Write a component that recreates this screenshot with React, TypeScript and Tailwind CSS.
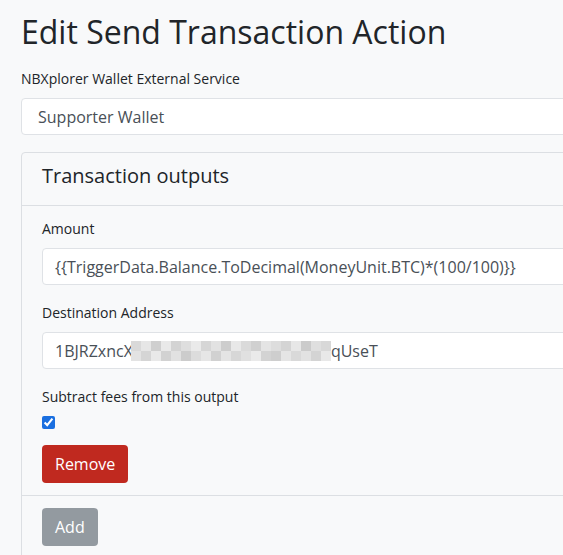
import type { ReactNode } from "react";

// shades for the blurred part of the address (pixelated mosaic)
const mosaicTop = ["#d9d9d9", "#e6e6e6", "#cfcfcf", "#e9e9e9", "#d3d3d3", "#dedede", "#eaeaea", "#d6d6d6", "#e2e2e2", "#cdcdcd", "#e8e8e8", "#dadada", "#d0d0d0", "#e4e4e4", "#dddddd", "#d4d4d4", "#e7e7e7", "#cbcbcb", "#dfdfdf", "#d8d8d8"];
const mosaicBottom = ["#e3e3e3", "#d5d5d5", "#e9e9e9", "#d2d2d2", "#e1e1e1", "#cccccc", "#dcdcdc", "#e6e6e6", "#d1d1d1", "#e4e4e4", "#d7d7d7", "#e0e0e0", "#eaeaea", "#d3d3d3", "#cecece", "#e5e5e5", "#d9d9d9", "#e2e2e2", "#d4d4d4", "#e8e8e8"];

export default function App() {
  return (
    <div className="w-[563px] h-[555px] overflow-hidden bg-[#f8f9fa] text-[#212529] font-['Open_Sans',sans-serif]">
      <div className="w-[800px] pl-[21px] pt-[13px]">
        <h1 className="text-[32px] leading-[1.2] font-normal">Edit Send Transaction Action</h1>

        <Label className="mt-[17px]">NBXplorer Wallet External Service</Label>
        <div className="h-[37px] flex items-center pl-4 bg-white border border-[#dfe2e6] rounded-[4px] text-[16px] text-[#495057]">
          Supporter Wallet
        </div>

        {/* Carte des sorties */}
        <div className="mt-[17px] border border-[#dcdfe3] rounded-[4px]">
          <div className="px-5 pt-[11px] pb-[17px] border-b border-[#dcdfe3]">
            <h4 className="text-[20px] leading-[1.2]">Transaction outputs</h4>
          </div>

          <div className="px-5 pt-3 pb-[12px]">
            <Label>Amount</Label>
            <Input>{"{{TriggerData.Balance.ToDecimal(MoneyUnit.BTC)*(100/100)}}"}</Input>

            <Label className="mt-[17px]">Destination Address</Label>
            <Input>
              <span>1BJRZxncX</span>
              <span className="flex flex-col -ml-[2px]">
                <span className="flex">
                  {mosaicTop.map((c, i) => (
                    <span key={i} className="w-[10px] h-[10px]" style={{ background: c }} />
                  ))}
                </span>
                <span className="flex">
                  {mosaicBottom.map((c, i) => (
                    <span key={i} className="w-[10px] h-[10px]" style={{ background: c }} />
                  ))}
                </span>
              </span>
              <span>qUseT</span>
            </Input>

            <Label className="mt-[17px]">Subtract fees from this output</Label>
            <div className="h-[13px] mt-[1px] flex items-center">
              <input type="checkbox" defaultChecked className="w-[13px] h-[13px] m-0 accent-[#1a6fe0]" />
            </div>

            <button className="mt-[16px] h-[38px] px-[13px] rounded-[4px] bg-[#c0291f] text-white text-[16px]">
              Remove
            </button>
          </div>

          <div className="px-5 pt-3 pb-3 border-t border-[#dcdfe3]">
            <button className="h-[38px] px-[13px] rounded-[4px] bg-[#939aa0] text-white text-[16px]">
              Add
            </button>
          </div>
        </div>
      </div>
    </div>
  );
}

function Label({ children, className = "" }: { children: ReactNode; className?: string }) {
  return <div className={`text-[14px] leading-[21px] mb-[9px] ${className}`}>{children}</div>;
}

function Input({ children }: { children: ReactNode }) {
  return (
    <div className="h-[37px] flex items-center px-3 bg-white border border-[#dfe2e6] rounded-[4px] text-[16px] text-[#495057] whitespace-nowrap">
      {children}
    </div>
  );
}
